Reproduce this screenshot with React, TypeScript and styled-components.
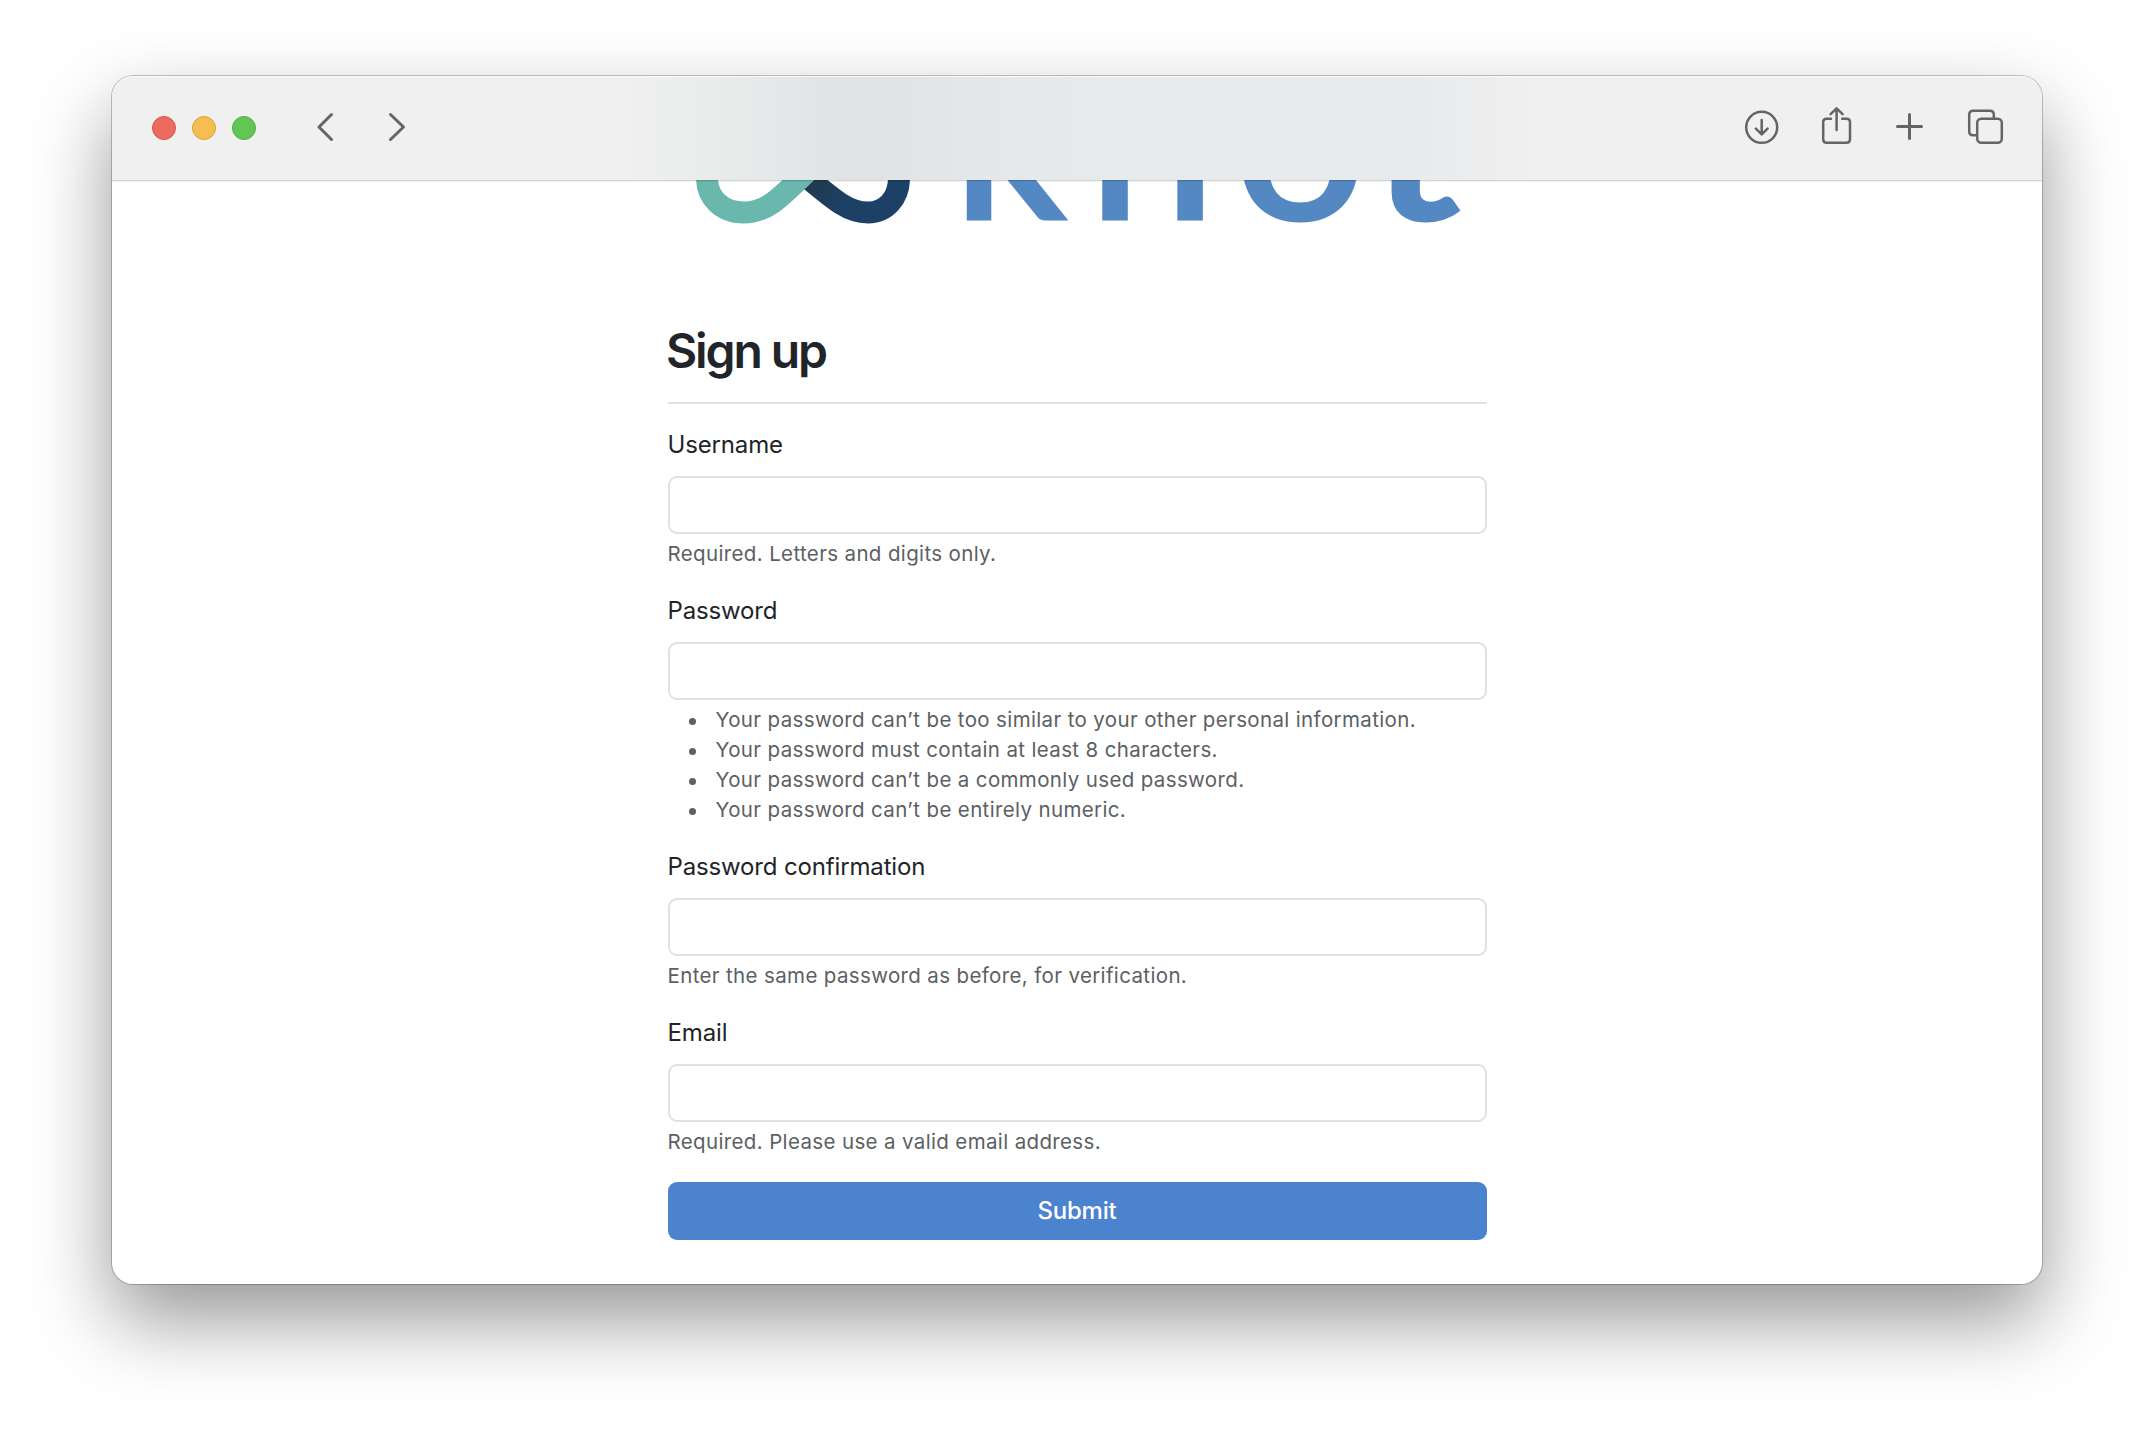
import React from "react";
import styled, { createGlobalStyle } from "styled-components";

const GlobalStyle = createGlobalStyle`
  *, *::before, *::after { box-sizing: border-box; }
  body {
    margin: 0;
    background: #ffffff;
    font-family: Inter, "Liberation Sans", sans-serif;
    color: #212529;
  }
`;

const Desktop = styled.div`
  height: 1432px;
  padding: 76px 112px 0;
  overflow: hidden;
`;

const BrowserWindow = styled.section`
  width: 1930px;
  height: 1208px;
  display: flex;
  flex-direction: column;
  background: #ffffff;
  border-radius: 21px;
  overflow: hidden;
  box-shadow: 0 0 0 1px rgba(0, 0, 0, 0.22), 0 36px 80px rgba(0, 0, 0, 0.41);
`;

const Toolbar = styled.header`
  flex: none;
  height: 104px;
  display: flex;
  align-items: center;
  padding: 0 38px 0 40px;
  background: linear-gradient(
    90deg,
    #f0f0f0 500px,
    #ebeeec 570px,
    #e5e9e9 650px,
    #e0e4e7 720px,
    #e0e4e7 780px,
    #e5e8ea 880px,
    #e8ebec 1010px,
    #e7ebed 1200px,
    #e7ebed 1300px,
    #ededee 1375px,
    #f0f0f0 1430px
  );
  box-shadow: inset 0 1px 1px rgba(255, 255, 255, 0.75);
`;

const Lights = styled.div`
  display: flex;
  gap: 16px;
`;

const Light = styled.span<{ $fill: string; $edge: string }>`
  width: 24px;
  height: 24px;
  border-radius: 50%;
  background: ${(p) => p.$fill};
  border: 1px solid ${(p) => p.$edge};
`;

const IconButton = styled.button<{ $gap: number }>`
  display: flex;
  padding: 0;
  border: 0;
  margin-left: ${(p) => p.$gap}px;
  background: none;
  color: #656565;
  svg {
    display: block;
    overflow: visible;
    fill: none;
    stroke: currentColor;
    stroke-linecap: round;
    stroke-linejoin: round;
  }
`;

const Spacer = styled.div`
  flex: 1;
`;

const Page = styled.main`
  flex: 1;
  display: flex;
  flex-direction: column;
  align-items: center;
`;

const Logo = styled.svg`
  display: block;
  width: 820px;
  height: 60px;
  font-family: Lato, sans-serif;
  font-weight: 400;
`;

const ToolbarEdge = styled.div`
  height: 2px;
  width: 100%;
  margin-bottom: -2px;
  z-index: 1;
  background: linear-gradient(rgba(0, 0, 0, 0.17) 50%, rgba(0, 0, 0, 0.05) 50%);
`;

const SignupForm = styled.form`
  width: 820px;
  padding: 80px 0 0 1px;
`;

const Title = styled.h1`
  margin: 0 0 23px;
  height: 84px;
  padding-top: 2px;
  border-bottom: 2px solid #dee2e6;
  font-size: 48px;
  font-weight: 600;
  line-height: 58px;
  letter-spacing: -2.1px;
  text-indent: -2px;
`;

const Field = styled.div`
  display: flex;
  flex-direction: column;
  margin-bottom: 24px;
`;

const Label = styled.label`
  margin-bottom: 13px;
  font-size: 24px;
  line-height: 36px;
  letter-spacing: -0.15px;
  text-indent: -0.5px;
`;

const Input = styled.input`
  width: 100%;
  height: 58px;
  margin-bottom: 5px;
  padding: 0 18px;
  border: 2px solid #dee2e6;
  border-radius: 9px;
  background: #ffffff;
  font: inherit;
  font-size: 24px;
  outline: none;
`;

const Help = styled.div`
  font-size: 20.5px;
  line-height: 30px;
  letter-spacing: 0.36px;
  color: #5c5f63;
  white-space: nowrap;
  text-indent: -0.5px;
`;

const Rules = styled.ul`
  margin: 0;
  padding: 0 0 0 21px;
  list-style: none;
`;

const Rule = styled.li`
  display: flex;
  align-items: center;
  &::before {
    content: "";
    width: 7px;
    height: 7px;
    margin: 3px 20px 0 0;
    border-radius: 50%;
    background: currentColor;
  }
`;

const Submit = styled.button`
  display: block;
  width: 100%;
  height: 58px;
  margin-top: 25px;
  padding: 0 1px 2px 0;
  border: 0;
  border-radius: 9px;
  background: #4b83ce;
  color: #ffffff;
  font: inherit;
  font-size: 24px;
  font-weight: 500;
  letter-spacing: -0.2px;
`;

const fields = [
  { id: "username", label: "Username", type: "text", help: "Required. Letters and digits only." },
  {
    id: "password",
    label: "Password",
    type: "password",
    rules: [
      "Your password can’t be too similar to your other personal information.",
      "Your password must contain at least 8 characters.",
      "Your password can’t be a commonly used password.",
      "Your password can’t be entirely numeric.",
    ],
  },
  { id: "confirm", label: "Password confirmation", type: "password", help: "Enter the same password as before, for verification." },
  { id: "email", label: "Email", type: "email", help: "Required. Please use a valid email address." },
];

const letters = [
  { char: "k", x: 954, stretch: 1.01 },
  { char: "n", x: 1089, stretch: 1.05 },
  { char: "o", x: 1235.5, stretch: 1.06 },
  { char: "t", x: 1369, stretch: 1.17 },
];

function KnotLogo() {
  return (
    <Logo viewBox="667 180 820 60" role="img" aria-label="knot">
      <defs>
        <linearGradient id="navy" gradientUnits="userSpaceOnUse" x1="803" y1="180" x2="842" y2="205">
          <stop offset="0" stopColor="#22343f" />
          <stop offset="0.3" stopColor="#223a4f" />
          <stop offset="1" stopColor="#1c4066" />
        </linearGradient>
      </defs>
      <g fill="none" strokeWidth="22">
        <path d="M790 163C832 198 846 212.5 868 212.5C886 212.5 899 198 899 178V160" stroke="url(#navy)" />
        <path d="M707 160V178C707 198 722 212.5 744 212.5C768 212.5 780 198 821 158" stroke="#6ab7ad" />
      </g>
      <g fontSize="215" fill="#5488c3" stroke="#5488c3" strokeWidth="5">
        {letters.map((l) => (
          <text key={l.char} transform={`translate(${l.x} 218.2) scale(${l.stretch} 1)`}>
            {l.char}
          </text>
        ))}
      </g>
    </Logo>
  );
}

export default function App() {
  return (
    <Desktop>
      <GlobalStyle />
      <BrowserWindow>
        <Toolbar>
          <Lights>
            <Light $fill="#ec6b5f" $edge="#d5564b" />
            <Light $fill="#f4be50" $edge="#d9a23d" />
            <Light $fill="#62c656" $edge="#4fae41" />
          </Lights>
          <IconButton $gap={60} aria-label="Back">
            <svg width="18" height="30" viewBox="316 113 18 30" strokeWidth="3">
              <path d="M331.5 114.5L319 127L331.5 139.5" />
            </svg>
          </IconButton>
          <IconButton $gap={54} aria-label="Forward">
            <svg width="18" height="30" viewBox="388 113 18 30" strokeWidth="3">
              <path d="M390.5 114.5L403.5 127L390.5 139.5" />
            </svg>
          </IconButton>
          <Spacer />
          <IconButton $gap={0} aria-label="Downloads">
            <svg width="36" height="40" viewBox="1744 108 36 40" strokeWidth="2.5">
              <circle cx="1761.7" cy="127.3" r="15.5" />
              <path d="M1761.7 120V134M1755.8 128.6L1761.7 134.4L1767.6 128.6" />
            </svg>
          </IconButton>
          <IconButton $gap={40} aria-label="Share">
            <svg width="34" height="40" viewBox="1820 108 34 40" strokeWidth="2.5">
              <path d="M1831 118.7H1826.5Q1823.2 118.7 1823.2 122V139.2Q1823.2 142.8 1826.8 142.8H1846.4Q1850 142.8 1850 139.2V122Q1850 118.7 1846.7 118.7H1842.2" />
              <path d="M1836.6 130V108.8M1830.6 114.2L1836.6 108.4L1842.6 114.2" />
            </svg>
          </IconButton>
          <IconButton $gap={40} aria-label="New tab">
            <svg width="32" height="40" viewBox="1894 108 32 40" strokeWidth="3">
              <path d="M1897.5 126.5H1921.5M1909.5 114.5V138.5" />
            </svg>
          </IconButton>
          <IconButton $gap={40} aria-label="Tab overview">
            <svg width="38" height="40" viewBox="1966 108 38 40" strokeWidth="2.5">
              <path d="M1976 135.2H1973.2Q1969.2 135.2 1969.2 131.2V114.8Q1969.2 110.8 1973.2 110.8H1989.8Q1993.8 110.8 1993.8 114.8V118" />
              <rect x="1977.2" y="118.7" width="24.6" height="24.1" rx="4" />
            </svg>
          </IconButton>
        </Toolbar>
        <Page>
          <ToolbarEdge />
          <KnotLogo />
          <SignupForm>
            <Title>Sign up</Title>
            {fields.map((f) => (
              <Field key={f.id}>
                <Label htmlFor={f.id}>{f.label}</Label>
                <Input id={f.id} type={f.type} />
                <Help>
                  {f.help}
                  {f.rules && (
                    <Rules>
                      {f.rules.map((r) => (
                        <Rule key={r}>{r}</Rule>
                      ))}
                    </Rules>
                  )}
                </Help>
              </Field>
            ))}
            <Submit type="button">Submit</Submit>
          </SignupForm>
        </Page>
      </BrowserWindow>
    </Desktop>
  );
}
